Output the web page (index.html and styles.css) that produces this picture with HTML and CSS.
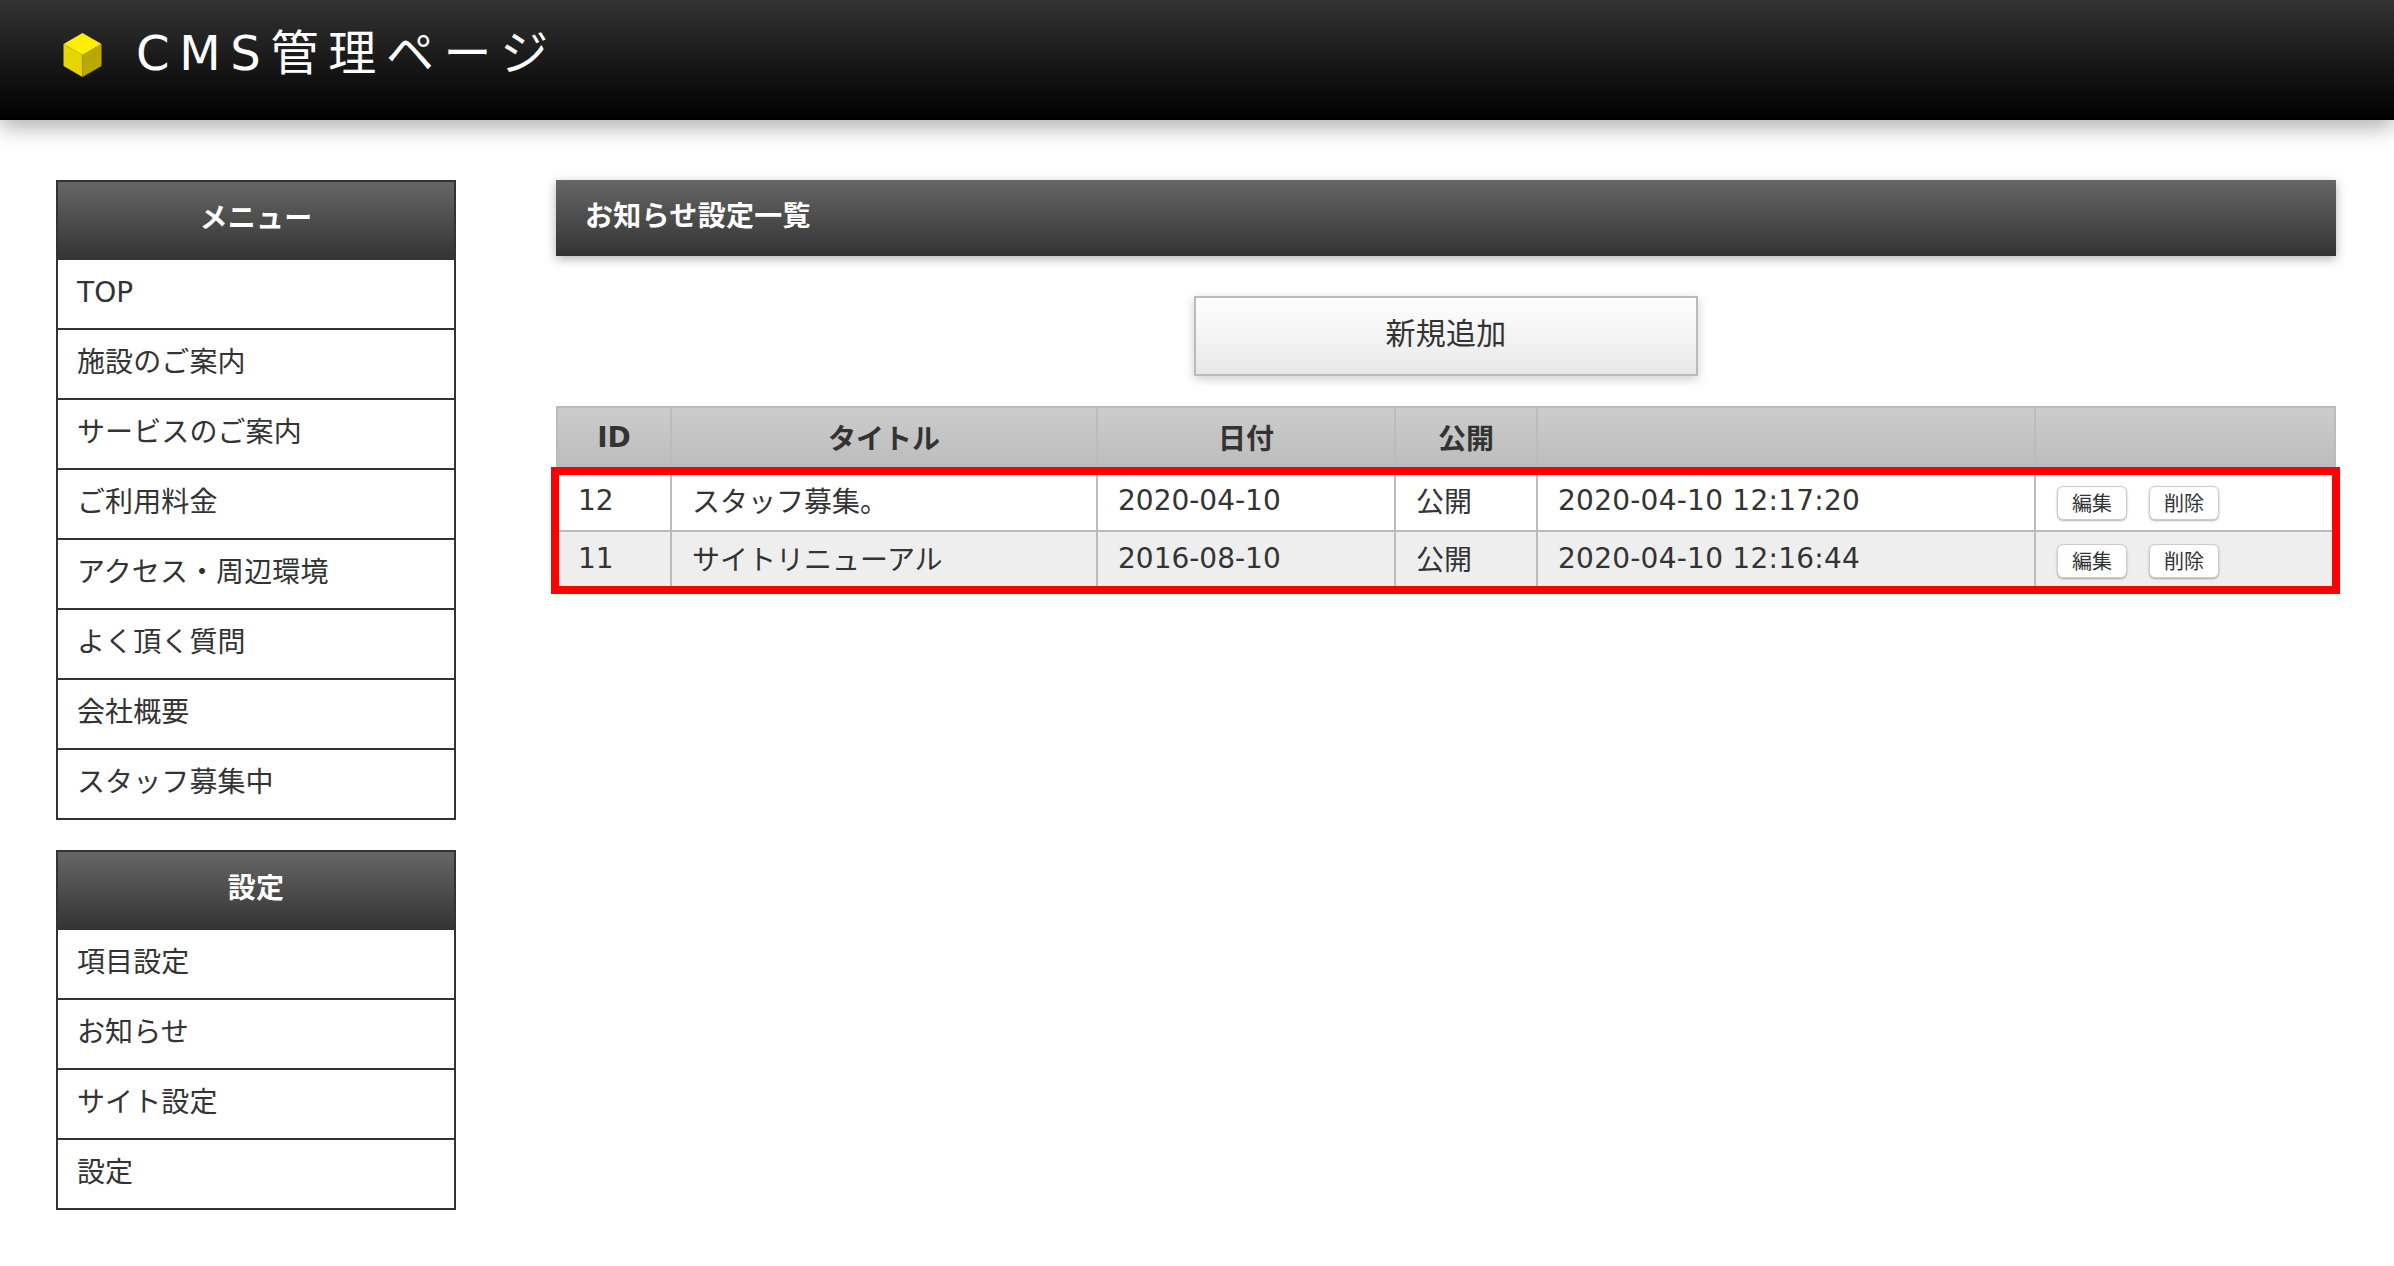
FILE: index.html
```html
<!DOCTYPE html>
<html lang="ja">
    <head>
        <meta charset="UTF-8">
        <title>CMS管理ページ</title>
        <link rel="stylesheet" href="styles.css">
    </head>
    <body>
        <div class="header">
            <svg class="logo" viewBox="0 0 40 44" aria-hidden="true">
                <polygon points="20,0 39,11 20,22 1,11" fill="#ffee00"/>
                <polygon points="1,11 20,22 20,44 1,33" fill="#e6d600"/>
                <polygon points="39,11 20,22 20,44 39,33" fill="#b9a900"/>
            </svg>
            <h1 class="site_title">CMS管理ページ</h1>
        </div>

        <div class="content">
            <div class="side">
                <div class="menu">
                    <div class="menu_title">メニュー</div>
                    <a class="menu_item">TOP</a>
                    <a class="menu_item">施設のご案内</a>
                    <a class="menu_item">サービスのご案内</a>
                    <a class="menu_item">ご利用料金</a>
                    <a class="menu_item">アクセス・周辺環境</a>
                    <a class="menu_item">よく頂く質問</a>
                    <a class="menu_item">会社概要</a>
                    <a class="menu_item">スタッフ募集中</a>
                </div>
                <div class="menu">
                    <div class="menu_title">設定</div>
                    <a class="menu_item">項目設定</a>
                    <a class="menu_item">お知らせ</a>
                    <a class="menu_item">サイト設定</a>
                    <a class="menu_item">設定</a>
                </div>
            </div>

            <div class="main">
                <h2 class="page_title">お知らせ設定一覧</h2>
                <div class="add_row">
                    <button class="add_btn">新規追加</button>
                </div>
                <div class="table_wrap">
                    <table class="list">
                        <colgroup>
                            <col class="col_id">
                            <col class="col_title">
                            <col class="col_date">
                            <col class="col_pub">
                            <col class="col_updated">
                            <col>
                        </colgroup>
                        <thead>
                            <tr>
                                <th>ID</th>
                                <th>タイトル</th>
                                <th>日付</th>
                                <th>公開</th>
                                <th></th>
                                <th></th>
                            </tr>
                        </thead>
                        <tbody>
                            <tr>
                                <td>12</td>
                                <td>スタッフ募集。</td>
                                <td>2020-04-10</td>
                                <td>公開</td>
                                <td class="updated">2020-04-10 12:17:20</td>
                                <td><button class="small_btn">編集</button><button class="small_btn">削除</button></td>
                            </tr>
                            <tr>
                                <td>11</td>
                                <td>サイトリニューアル</td>
                                <td>2016-08-10</td>
                                <td>公開</td>
                                <td class="updated">2020-04-10 12:16:44</td>
                                <td><button class="small_btn">編集</button><button class="small_btn">削除</button></td>
                            </tr>
                        </tbody>
                    </table>
                    <div class="highlight"></div>
                </div>
            </div>
        </div>
    </body>
</html>
```

FILE: styles.css
```css
body {
    margin: 0;
    background-color: white;
    color: #333333;
    font-family: "DejaVu Sans", "Noto Sans CJK JP", sans-serif;
    font-size: 28px;
}

/*  HEADER  */
.header {
    height: 120px;
    display: flex;
    align-items: center;
    padding-left: 62px;
    padding-bottom: 10px;
    box-sizing: border-box;
    background: linear-gradient(#333333, #000000);
    box-shadow: 0 8px 20px 0 rgba(0, 0, 0, 0.3);
}
.logo {
    width: 41px;
    height: 44px;
}
.site_title {
    margin: 0 0 4px 33px;
    color: white;
    font-family: "DejaVu Sans", "Noto Sans CJK JP", sans-serif;
    font-size: 48px;
    font-weight: normal;
    letter-spacing: 9.7px;
    line-height: 1;
}

/*  BODY  */
.content {
    display: flex;
    padding: 60px 58px 56px 56px;
    gap: 100px;
}
.side {
    width: 400px;
    flex-shrink: 0;
    display: flex;
    flex-direction: column;
    gap: 30px;
}
.menu {
    border: 2px solid #333333;
    display: flex;
    flex-direction: column;
}
.menu_title {
    height: 78px;
    box-sizing: border-box;
    padding-bottom: 10px;
    display: flex;
    align-items: center;
    justify-content: center;
    color: white;
    font-weight: bold;
    letter-spacing: 0.3px;
    background: linear-gradient(#666666, #333333);
}
.menu_item {
    height: 66px;
    padding: 0 0 2px 19px;
    display: flex;
    align-items: center;
    border-top: 2px solid #333333;
    letter-spacing: 0.1px;
    line-height: 60px;
}
.menu_title + .menu_item {
    border-top: 0;
}

/*  MAIN  */
.main {
    flex: 1;
}
.page_title {
    margin: 0;
    height: 76px;
    box-sizing: border-box;
    padding: 0 0 9px 29px;
    display: flex;
    align-items: center;
    color: white;
    font-size: 28px;
    letter-spacing: 0.3px;
    background: linear-gradient(#666666, #333333);
    box-shadow: 0 3px 10px 0 rgba(0, 0, 0, 0.3);
}
.add_row {
    display: flex;
    justify-content: center;
    margin: 40px 0 30px;
}
.add_btn {
    width: 504px;
    height: 80px;
    padding: 0 0 11px;
    color: #333333;
    font-family: inherit;
    font-size: 30px;
    letter-spacing: 0.2px;
    border: 2px solid #bbbbbb;
    background: linear-gradient(#ffffff, #e8e8e8);
    box-shadow: 0 3px 10px 0 rgba(0, 0, 0, 0.2);
}

/*  TABLE  */
.table_wrap {
    position: relative;
}
.list {
    width: 100%;
    table-layout: fixed;
    border-collapse: collapse;
}
.col_id {
    width: 114px;
}
.col_title {
    width: 426px;
}
.col_date {
    width: 298px;
}
.col_pub {
    width: 142px;
}
.col_updated {
    width: 498px;
}
.list th,
.list td {
    border: 2px solid #bbbbbb;
    text-align: left;
}
.list th {
    height: 58px;
    padding: 0 0 6px;
    text-align: center;
    background: linear-gradient(#cccccc, #bbbbbb);
}
.list td {
    height: 52px;
    padding: 0 19px 4px 20px;
}
.list tbody tr:nth-child(even) td {
    background-color: #eeeeee;
}
.updated {
    letter-spacing: 0.25px;
}
.small_btn {
    width: 70px;
    height: 34px;
    padding: 0;
    margin: 5px 22px 0 1px;
    vertical-align: middle;
    color: #333333;
    font-family: inherit;
    font-size: 20px;
    border: 1px solid #cccccc;
    border-radius: 6px;
    background-color: white;
    box-shadow: 0 1px 2px 0 rgba(0, 0, 0, 0.3);
}
.small_btn + .small_btn {
    margin-left: 0;
}
.highlight {
    position: absolute;
    left: -5px;
    right: -4px;
    top: 61px;
    height: 111px;
    border: 8px solid #ff0000;
}
```
